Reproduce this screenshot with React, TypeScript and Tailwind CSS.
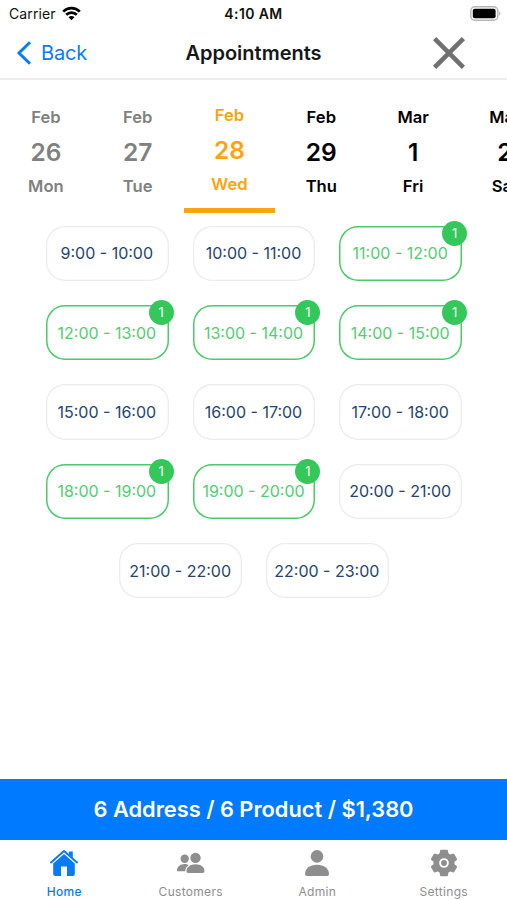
import type { ReactNode } from "react";

type Day = { month: string; date: string; weekday: string; state: "past" | "active" | "next" };

const days: Day[] = [
  { month: "Feb", date: "26", weekday: "Mon", state: "past" },
  { month: "Feb", date: "27", weekday: "Tue", state: "past" },
  { month: "Feb", date: "28", weekday: "Wed", state: "active" },
  { month: "Feb", date: "29", weekday: "Thu", state: "next" },
  { month: "Mar", date: "1", weekday: "Fri", state: "next" },
  { month: "Mar", date: "2", weekday: "Sat", state: "next" },
];

const dayColors = {
  past: "text-[#808080] pt-[2px] border-transparent",
  active: "text-[#fca40b] border-[#fca40b]",
  next: "text-black pt-[2px] border-transparent",
};

const slots: { time: string; count?: number }[] = [
  { time: "9:00 - 10:00" },
  { time: "10:00 - 11:00" },
  { time: "11:00 - 12:00", count: 1 },
  { time: "12:00 - 13:00", count: 1 },
  { time: "13:00 - 14:00", count: 1 },
  { time: "14:00 - 15:00", count: 1 },
  { time: "15:00 - 16:00" },
  { time: "16:00 - 17:00" },
  { time: "17:00 - 18:00" },
  { time: "18:00 - 19:00", count: 1 },
  { time: "19:00 - 20:00", count: 1 },
  { time: "20:00 - 21:00" },
  { time: "21:00 - 22:00" },
  { time: "22:00 - 23:00" },
];

function StatusBar() {
  return (
    <div className="grid h-7 grid-cols-[1fr_auto_1fr] items-center text-[14px] text-[#111]">
      <div className="flex items-center gap-[6px] pb-px pl-[9px]">
        <span className="tracking-[0.1px]">Carrier</span>
        <svg width="19" height="15" viewBox="0 0 19 15" fill="none" stroke="black" strokeWidth="2.7">
          <path d="M1.2 5.6a11.8 11.8 0 0 1 16.6 0" />
          <path d="M4.2 8.8a7.5 7.5 0 0 1 10.6 0" />
          <path d="M9.5 14.2 6.5 11.2a4.2 4.2 0 0 1 6 0Z" fill="black" stroke="none" />
        </svg>
      </div>
      <span className="pb-px text-center font-semibold tracking-[0.4px]">4:10 AM</span>
      <div className="flex justify-end pb-px pr-[6px]">
        <svg width="31" height="15" viewBox="0 0 31 15">
          <rect x="0.8" y="0.8" width="27" height="13.4" rx="4" fill="white" stroke="#b5b5b5" strokeWidth="1.4" />
          <rect x="2.8" y="2.7" width="22.8" height="9.6" rx="2" fill="black" />
          <path d="M29.3 5.2q2.2 2.3 0 4.6Z" fill="#aaa" />
        </svg>
      </div>
    </div>
  );
}

function Header() {
  return (
    <header className="grid h-[52px] grid-cols-[1fr_auto_1fr] items-center border-b-2 border-[#ededed] pb-px">
      <div className="flex items-center gap-[9px] pl-4 text-[#087cf8]">
        <svg width="16" height="24" viewBox="0 0 16 24" fill="none" stroke="currentColor" strokeWidth="3">
          <path d="M14 1.2 3 12l11 10.8" />
        </svg>
        <span className="text-[20px] tracking-[-0.2px]">Back</span>
      </div>
      <h1 className="whitespace-nowrap text-[20px] font-semibold text-[#171719]">Appointments</h1>
      <div className="flex justify-end pr-[42px]">
        <svg width="32" height="32" viewBox="0 0 32 32" stroke="#707070" strokeWidth="4.6">
          <path d="M1.6 1.6 30.4 30.4M30.4 1.6 1.6 30.4" />
        </svg>
      </div>
    </header>
  );
}

function DayStrip() {
  return (
    <div className="flex h-[134px] overflow-hidden pt-[23px]">
      {days.map((d) => (
        <div
          key={d.month + d.date}
          className={`flex h-[110px] w-[91.8px] shrink-0 flex-col items-center border-b-[5px] font-semibold ${dayColors[d.state]}`}
        >
          <span className="text-[16.6px] leading-6">{d.month}</span>
          <span className="mt-[8px] text-[24.5px] leading-[30px]">{d.date}</span>
          <span className="mt-[8px] text-[16.6px] leading-[23px]">{d.weekday}</span>
        </div>
      ))}
    </div>
  );
}

function Slot({ time, count }: { time: string; count?: number }) {
  return (
    <div
      className={`relative flex h-[55.4px] w-[122.7px] items-center justify-center rounded-[19px] whitespace-nowrap pr-px text-[16px] ${
        count
          ? "text-[#55cb74] shadow-[inset_0_0_0_1.5px_#4bca6b]"
          : "text-[#26446c] shadow-[inset_0_0_0_1.3px_#ececee]"
      }`}
    >
      {time}
      {count && (
        <span className="absolute -right-[5px] -top-[5px] flex size-[25px] items-center justify-center rounded-full bg-[#34c759] pt-px text-[13px] text-white">
          {count}
        </span>
      )}
    </div>
  );
}

function Tab({ label, active, children }: { label: string; active?: boolean; children: ReactNode }) {
  return (
    <div className={`flex flex-1 flex-col items-center pt-[9px] ${active ? "font-medium text-[#087cf8]" : "text-[#8e8e8f]"}`}>
      <svg className="shrink-0" width="28" height="28" viewBox="0 0 28 28" fill="currentColor">
        {children}
      </svg>
      <span className="mt-[7px] text-[12px] leading-4 tracking-[0.3px]">{label}</span>
    </div>
  );
}

export default function App() {
  return (
    <div className="flex h-[900px] w-[507px] flex-col overflow-hidden bg-white font-['Inter',sans-serif]">
      <StatusBar />
      <Header />
      <DayStrip />
      <main className="mt-[11.5px] flex flex-1 flex-wrap content-start justify-center gap-6 pl-[41px] pr-10">
        {slots.map((s) => (
          <Slot key={s.time} {...s} />
        ))}
      </main>
      <div className="flex h-[61px] shrink-0 items-center justify-center bg-[#007aff] text-[21.8px] font-semibold text-white">
        6 Address / 6 Product / $1,380
      </div>
      <nav className="flex h-[60px] shrink-0 pl-px">
        <Tab label="Home" active>
          <path d="M18.8 2.4h4v7l-4-3.6Z" />
          <path d="M1 13.4 14 2 27 13.4" fill="none" stroke="currentColor" strokeWidth="2" strokeLinecap="round" strokeLinejoin="round" />
          <path d="M14 4.9 24.8 14.4V25q0 2-2 2H17V17.6h-6V27H5.2q-2 0-2-2V14.4Z" />
        </Tab>
        <Tab label="Customers">
          <circle cx="7.7" cy="9.7" r="4.2" />
          <circle cx="18.5" cy="8.9" r="5.2" />
          <path d="M0 21.7c0-3.9 3.2-6.7 7.6-6.7 1.8 0 3.1.4 4.2 1.1-2.2 1.4-3.4 3.4-3.6 6.2H.8q-.8 0-.8-.6Z" />
          <path d="M9.4 22.1c0-3.9 3.9-6.8 9.1-6.8s9 2.9 9 6.8q0 1.8-1.5 1.8H10.9q-1.5 0-1.5-1.8Z" />
        </Tab>
        <Tab label="Admin">
          <circle cx="14" cy="7.4" r="6.3" />
          <path d="M2 25c0-5.3 4.9-9.2 12-9.2S26 19.7 26 25q0 2-1.8 2H3.8Q2 27 2 25Z" />
        </Tab>
        <Tab label="Settings">
          <circle cx="14" cy="14" r="10.2" />
          <path
            stroke="currentColor"
            strokeWidth="1.8"
            strokeLinejoin="round"
            d="M11 1.6h6l.6 3.4 2.6 1.5 3.2-1.1 2.8 4.8-2.6 2.2v3.2l2.6 2.2-2.8 4.8-3.2-1.1-2.6 1.5-.6 3.4h-6l-.6-3.4-2.6-1.5-3.2 1.1-2.8-4.8 2.6-2.2v-3.2l-2.6-2.2 2.8-4.8 3.2 1.1L10.4 5Z"
          />
          <circle cx="14" cy="14" r="3.9" fill="none" stroke="white" strokeWidth="1.9" />
        </Tab>
      </nav>
    </div>
  );
}
